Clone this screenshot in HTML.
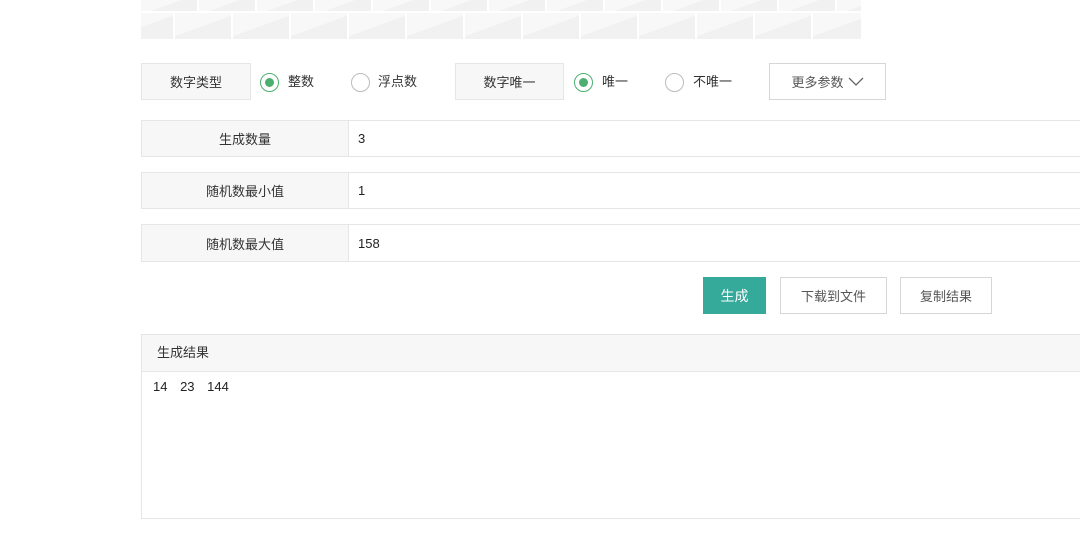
<!DOCTYPE html>
<html><head><meta charset="utf-8"><style>
*{box-sizing:border-box;margin:0;padding:0}
body{width:1080px;height:545px;background:#fff;font-family:"Liberation Sans","Noto Sans CJK SC",sans-serif;font-size:13px;color:#333;position:relative;overflow:hidden}
.a{position:absolute}
.tile{position:absolute;background:linear-gradient(160deg,#f8f8f8 50%,#f1f1f1 50%)}
.lab{position:absolute;background:#f7f7f7;border:1px solid #e6e6e6;display:flex;align-items:center;justify-content:center}
.rad{position:absolute;width:19px;height:19px;border-radius:50%;border:1px solid #bbb;background:#fff}
.rad.on{border-color:#4caf70}
.rad.on::after{content:"";position:absolute;left:4px;top:4px;width:9px;height:9px;border-radius:50%;background:#4caf70}
.t{position:absolute;line-height:18px}
.btn{position:absolute;border:1px solid #d6d6d6;background:#fff;display:flex;align-items:center;justify-content:center;color:#555}
.inp{position:absolute;left:348px;width:740px;border:1px solid #e6e6e6;border-left:none;padding-left:10px;display:flex;align-items:center;color:#222}
</style></head><body>
<div class="a" style="left:141px;top:0;width:720px;height:39px;background:#fff;overflow:hidden">
<div class="tile" style="left:0;top:-2px;width:56px;height:13px"></div>
<div class="tile" style="left:58px;top:-2px;width:56px;height:13px"></div>
<div class="tile" style="left:116px;top:-2px;width:56px;height:13px"></div>
<div class="tile" style="left:174px;top:-2px;width:56px;height:13px"></div>
<div class="tile" style="left:232px;top:-2px;width:56px;height:13px"></div>
<div class="tile" style="left:290px;top:-2px;width:56px;height:13px"></div>
<div class="tile" style="left:348px;top:-2px;width:56px;height:13px"></div>
<div class="tile" style="left:406px;top:-2px;width:56px;height:13px"></div>
<div class="tile" style="left:464px;top:-2px;width:56px;height:13px"></div>
<div class="tile" style="left:522px;top:-2px;width:56px;height:13px"></div>
<div class="tile" style="left:580px;top:-2px;width:56px;height:13px"></div>
<div class="tile" style="left:638px;top:-2px;width:56px;height:13px"></div>
<div class="tile" style="left:696px;top:-2px;width:56px;height:13px"></div>
<div class="tile" style="left:-25px;top:13px;width:57px;height:26px"></div>
<div class="tile" style="left:34px;top:13px;width:56px;height:26px"></div>
<div class="tile" style="left:92px;top:13px;width:56px;height:26px"></div>
<div class="tile" style="left:150px;top:13px;width:56px;height:26px"></div>
<div class="tile" style="left:208px;top:13px;width:56px;height:26px"></div>
<div class="tile" style="left:266px;top:13px;width:56px;height:26px"></div>
<div class="tile" style="left:324px;top:13px;width:56px;height:26px"></div>
<div class="tile" style="left:382px;top:13px;width:56px;height:26px"></div>
<div class="tile" style="left:440px;top:13px;width:56px;height:26px"></div>
<div class="tile" style="left:498px;top:13px;width:56px;height:26px"></div>
<div class="tile" style="left:556px;top:13px;width:56px;height:26px"></div>
<div class="tile" style="left:614px;top:13px;width:56px;height:26px"></div>
<div class="tile" style="left:672px;top:13px;width:56px;height:26px"></div>
</div>

<div class="lab" style="left:141px;top:63px;width:110px;height:37px">数字类型</div>
<div class="rad on" style="left:260px;top:73px"></div><div class="t" style="left:288px;top:73px">整数</div>
<div class="rad" style="left:351px;top:73px"></div><div class="t" style="left:378px;top:73px">浮点数</div>
<div class="lab" style="left:455px;top:63px;width:109px;height:37px">数字唯一</div>
<div class="rad on" style="left:574px;top:73px"></div><div class="t" style="left:602px;top:73px">唯一</div>
<div class="rad" style="left:665px;top:73px"></div><div class="t" style="left:693px;top:73px">不唯一</div>
<div class="btn" style="left:769px;top:63px;width:117px;height:37px">更多参数 <svg width="16" height="10" style="margin-left:4px"><path d="M1 1 L8 8 L15 1" stroke="#666" fill="none" stroke-width="1.3"/></svg></div>

<div class="lab" style="left:141px;top:120px;width:208px;height:37px">生成数量</div><div class="inp" style="top:120px;height:37px">3</div>
<div class="lab" style="left:141px;top:172px;width:208px;height:37px">随机数最小值</div><div class="inp" style="top:172px;height:37px">1</div>
<div class="lab" style="left:141px;top:224px;width:208px;height:38px">随机数最大值</div><div class="inp" style="top:224px;height:38px">158</div>

<div class="btn" style="left:703px;top:277px;width:63px;height:37px;background:#35a99a;border-color:#35a99a;color:#fff;font-size:14px">生成</div>
<div class="btn" style="left:780px;top:277px;width:107px;height:37px">下载到文件</div>
<div class="btn" style="left:900px;top:277px;width:92px;height:37px">复制结果</div>

<div class="a" style="left:141px;top:334px;width:950px;height:185px;border:1px solid #e6e6e6">
<div style="height:37px;background:#f7f7f7;border-bottom:1px solid #e6e6e6;padding-left:15px;line-height:36px">生成结果</div>
<div style="padding:7px 0 0 11px;color:#222;word-spacing:9px">14 23 144</div>
</div>
</body></html>
